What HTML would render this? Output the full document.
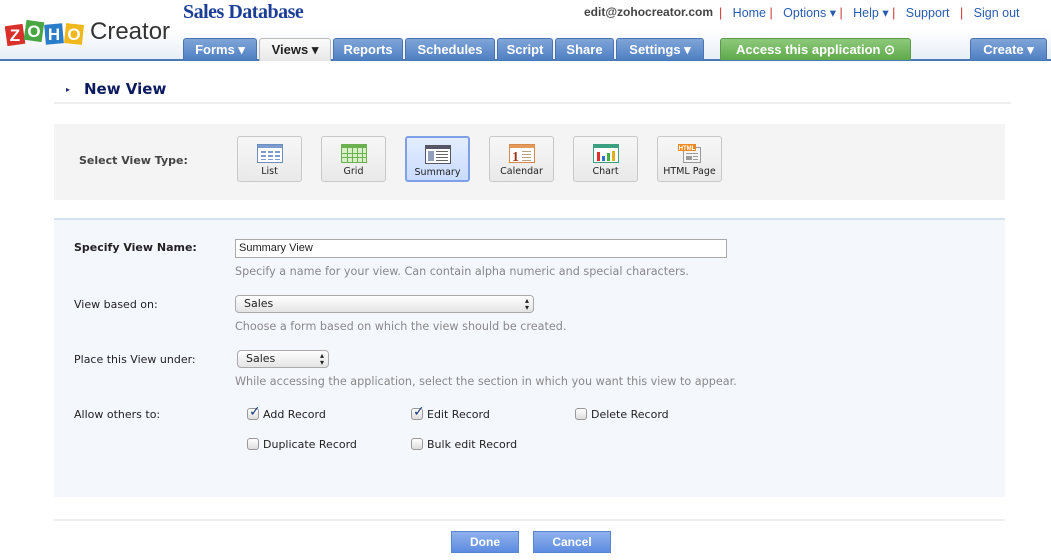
<!DOCTYPE html>
<html><head><meta charset="utf-8"><style>
*{margin:0;padding:0;box-sizing:border-box}
body{width:1051px;height:560px;background:#fff;font-family:"DejaVu Sans","Liberation Sans",sans-serif;font-size:11px;color:#222;position:relative;overflow:hidden}
.a{position:absolute}
.hdr{left:0;top:0;width:1051px;height:61px;background:linear-gradient(#fff 0,#fff 30px,#e6edf6 61px);border-bottom:2px solid #4a78b8}
.tab{position:absolute;top:38px;height:22px;background:linear-gradient(#7fa5d8,#4f7fc2);border:1px solid #4a73b0;border-bottom:none;border-radius:3px 3px 0 0;color:#fff;font:bold 13px "Liberation Sans",sans-serif;text-align:center;line-height:21px}
.tab.sel{background:linear-gradient(#fafafa,#e8e8e8);color:#222;border-color:#bbb;height:23px}
.tab.g{background:linear-gradient(#8cc97a,#5fa94b);border-color:#5a9a48}
.top{top:5px;font:12.5px "Liberation Sans",sans-serif;color:#2a5db0;white-space:nowrap}
.sep{color:#c33}
.vt{position:absolute;top:136px;width:65px;height:46px;border:1px solid #c8c8c8;border-radius:3px;background:linear-gradient(#f7f7f7,#e9e9e9);text-align:center;font-size:9.5px;color:#222}
.vt.s{background:linear-gradient(#e4edff,#c9dbff);border:2px solid #7fa0e8}
.vt svg{display:block;margin:7px auto 3px}
.lab{font-size:11px;color:#222}
.hint{font-size:11.2px;color:#888}
.cb{display:inline-block;width:12px;height:12px;border:1px solid #999;border-radius:3px;background:linear-gradient(#fff,#ddd);vertical-align:-2px;margin-right:4px;position:relative}
.ck{position:absolute;left:1px;top:-5px;font-size:14px;color:#1d3f7a;font-weight:bold}
.sel2{height:18px;border:1px solid #aaa;border-radius:4px;background:linear-gradient(#fff,#e4e4e4);font-size:11px;line-height:16px;padding-left:8px}
.arr{position:absolute;right:4px;top:1px;font-size:8px;line-height:7px;color:#222}
.btn{top:531px;height:22px;background:linear-gradient(#8fb2ee,#5d8be0);border:1px solid #5a85d0;color:#fff;font:bold 12px "Liberation Sans",sans-serif;text-align:center;line-height:21px}
</style></head><body>
<div class="a hdr"></div>
<div class="a" style="left:5px;top:18px;width:80px;height:30px">
<svg width="80" height="30"><g font-family="Liberation Sans" font-weight="bold" font-size="17" fill="#fff" text-anchor="middle">
<rect x="1" y="7" width="18" height="20" fill="#d9302b" transform="rotate(-8 10 17)"/><text x="10" y="23">Z</text>
<rect x="20" y="3" width="18" height="20" fill="#4aa545" transform="rotate(8 29 13)"/><text x="29" y="19">O</text>
<rect x="40" y="6" width="18" height="20" fill="#2a7dc8" transform="rotate(-5 49 16)"/><text x="49" y="22">H</text>
<rect x="60" y="6" width="18" height="20" fill="#f0b81c" transform="rotate(6 69 16)"/><text x="69" y="22">O</text></g></svg></div>
<div class="a" style="left:90px;top:18px;font:24px 'Liberation Sans',sans-serif;color:#333">Creator</div>
<div class="a" style="left:183px;top:1px;font:bold 20px 'Liberation Serif',serif;color:#1c3e96;letter-spacing:-0.5px">Sales Database</div>
<div class="a top" style="left:584px;color:#444;font-weight:bold;font-size:12px">edit@zohocreator.com</div>
<div class="a top" style="left:719px"><span class="sep">|</span>&nbsp;&nbsp; Home <span class="sep">|</span>&nbsp;&nbsp; Options ▾ <span class="sep">|</span>&nbsp;&nbsp; Help ▾ <span class="sep">|</span>&nbsp;&nbsp; Support &nbsp;&nbsp;<span class="sep">|</span>&nbsp;&nbsp; Sign out</div>
<div class="tab" style="left:183px;width:74px">Forms ▾</div>
<div class="tab sel" style="left:259px;width:72px">Views ▾</div>
<div class="tab" style="left:333px;width:70px">Reports</div>
<div class="tab" style="left:405px;width:90px">Schedules</div>
<div class="tab" style="left:497px;width:56px">Script</div>
<div class="tab" style="left:555px;width:59px">Share</div>
<div class="tab" style="left:616px;width:88px">Settings ▾</div>
<div class="tab g" style="left:720px;width:191px">Access this application ⊙</div>
<div class="tab" style="left:970px;width:77px">Create ▾</div>

<div class="a" style="left:66px;top:85px;font-size:8px;color:#1c2a6e">▸</div>
<div class="a" style="left:84px;top:80px;font:bold 15px 'DejaVu Sans',sans-serif;color:#0c1a5e">New View</div>
<div class="a" style="left:54px;top:102px;width:957px;height:2px;background:#eee"></div>

<div class="a" style="left:54px;top:124px;width:951px;height:76px;background:#f4f4f4"></div>
<div class="a lab" style="left:79px;top:154px;font-weight:bold;color:#444">Select View Type:</div>
<div class="vt" style="left:237px"><svg width="26" height="19"><rect x=".5" y=".5" width="25" height="18" fill="#fff" stroke="#6d8fc0"/><rect x="1" y="1" width="24" height="3" fill="#7b9ccc"/><g fill="#7b9ccc"><rect x="4" y="7" width="5" height="2"/><rect x="11" y="7" width="5" height="2"/><rect x="18" y="7" width="5" height="2"/><rect x="4" y="11" width="5" height="2"/><rect x="11" y="11" width="5" height="2"/><rect x="18" y="11" width="5" height="2"/><rect x="4" y="15" width="5" height="1"/><rect x="11" y="15" width="5" height="1"/><rect x="18" y="15" width="5" height="1"/></g></svg>List</div>
<div class="vt" style="left:321px"><svg width="26" height="19"><rect x=".5" y=".5" width="25" height="18" fill="#d8f0c8" stroke="#6bb14f"/><rect x="1" y="1" width="24" height="3" fill="#6bb14f"/><g stroke="#6bb14f"><path d="M1 9.5h24M1 13.5h24M6.5 4v15M11.5 4v15M16.5 4v15M21.5 4v15"/></g></svg>Grid</div>
<div class="vt s" style="left:405px"><svg width="26" height="19"><rect x=".5" y=".5" width="25" height="18" fill="#fff" stroke="#556"/><rect x="1" y="1" width="24" height="3" fill="#556"/><rect x="3" y="6" width="6" height="10" fill="#8fa0b8"/><g fill="#666"><rect x="11" y="6" width="12" height="1"/><rect x="11" y="9" width="12" height="1"/><rect x="11" y="12" width="12" height="1"/><rect x="11" y="15" width="12" height="1"/></g></svg>Summary</div>
<div class="vt" style="left:489px"><svg width="26" height="19"><rect x=".5" y=".5" width="25" height="18" fill="#fff" stroke="#d98a4a"/><rect x="1" y="1" width="24" height="3" fill="#e39a5a"/><text x="3" y="17" font-family="Liberation Serif" font-weight="bold" font-size="14" fill="#a03818">1</text><g fill="#b9a080"><rect x="13" y="7" width="9" height="1"/><rect x="13" y="10" width="9" height="1"/><rect x="13" y="13" width="9" height="1"/><rect x="13" y="16" width="9" height="1"/></g></svg>Calendar</div>
<div class="vt" style="left:573px"><svg width="26" height="19"><rect x=".5" y=".5" width="25" height="18" fill="#fff" stroke="#3aa080"/><rect x="1" y="1" width="24" height="3" fill="#3aa080"/><rect x="4" y="8" width="3" height="9" fill="#e03030"/><rect x="9" y="12" width="3" height="5" fill="#3070d0"/><rect x="14" y="9" width="3" height="8" fill="#40b040"/><rect x="19" y="7" width="3" height="10" fill="#e0b020"/></svg>Chart</div>
<div class="vt" style="left:657px"><svg width="26" height="19"><rect x="6.5" y="3.5" width="17" height="15" fill="#f4f4f4" stroke="#999"/><rect x="1" y="0" width="18" height="7" fill="#f08a20"/><text x="10" y="6" text-anchor="middle" font-family="Liberation Sans" font-weight="bold" font-size="6" fill="#fff">HTML</text><g fill="#999"><rect x="9" y="9" width="12" height="1"/><rect x="9" y="12" width="6" height="4"/><rect x="16" y="12" width="5" height="1"/><rect x="16" y="15" width="5" height="1"/></g></svg>HTML Page</div>

<div class="a" style="left:54px;top:218px;width:951px;height:279px;background:#f4f7fc;border-top:2px solid #d2e2f2"></div>
<div class="a lab" style="left:74px;top:241px;font-weight:bold">Specify View Name:</div>
<div class="a" style="left:235px;top:239px;width:492px;height:19px;border:1px solid #aaa;background:#fff;font:11px 'Liberation Sans',sans-serif;line-height:17px;padding-left:3px">Summary View</div>
<div class="a hint" style="left:235px;top:265px">Specify a name for your view. Can contain alpha numeric and special characters.</div>
<div class="a lab" style="left:74px;top:298px">View based on:</div>
<div class="a sel2" style="left:235px;top:295px;width:299px">Sales<span class="arr">▴<br>▾</span></div>
<div class="a hint" style="left:235px;top:320px">Choose a form based on which the view should be created.</div>
<div class="a lab" style="left:74px;top:353px">Place this View under:</div>
<div class="a sel2" style="left:237px;top:350px;width:92px">Sales<span class="arr">▴<br>▾</span></div>
<div class="a hint" style="left:235px;top:375px">While accessing the application, select the section in which you want this view to appear.</div>
<div class="a lab" style="left:74px;top:408px">Allow others to:</div>
<div class="a lab" style="left:247px;top:408px"><span class="cb"><span class="ck">✓</span></span>Add Record</div>
<div class="a lab" style="left:411px;top:408px"><span class="cb"><span class="ck">✓</span></span>Edit Record</div>
<div class="a lab" style="left:575px;top:408px"><span class="cb"></span>Delete Record</div>
<div class="a lab" style="left:247px;top:438px"><span class="cb"></span>Duplicate Record</div>
<div class="a lab" style="left:411px;top:438px"><span class="cb"></span>Bulk edit Record</div>

<div class="a" style="left:54px;top:519px;width:951px;height:2px;background:#eee"></div>
<div class="a btn" style="left:451px;width:68px">Done</div>
<div class="a btn" style="left:533px;width:78px;top:531px">Cancel</div>
</body></html>
